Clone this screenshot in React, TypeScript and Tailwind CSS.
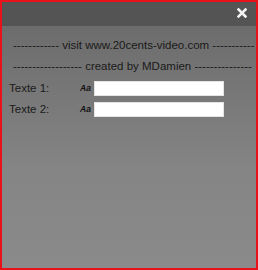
import React from "react";

export default function App() {
  return (
    <div
      className="w-[258px] h-[270px] border-2 border-[#e8131a] flex flex-col overflow-hidden"
      style={{ fontFamily: '"Liberation Sans", Arial, sans-serif' }}
    >
      <div className="h-[24px] shrink-0 bg-[#545454] flex items-start justify-end pr-[9px] pt-[6px]">
        <svg width="10" height="10" viewBox="0 0 10 10">
          <path d="M1.5 1.5 L8.5 8.5 M8.5 1.5 L1.5 8.5" stroke="#f4f4f4" strokeWidth="2.5" strokeLinecap="square" />
        </svg>
      </div>
      <div className="flex-1 bg-gradient-to-b from-[#6c6c6c] via-[#858585] via-60% to-[#8a8a8a] text-[#1a1a1a] text-[11.5px] leading-[21px]">
        <div className="pt-[9px] pl-[11px] whitespace-pre">{"------------ visit www.20cents-video.com -----------"}</div>
        <div className="pl-[11px] h-[22px] whitespace-pre">{"------------------ created by MDamien ---------------"}</div>
        <div className="flex items-center h-[21px] pl-[7px]">
          <span className="w-[71px]">Texte 1:</span>
          <span className="w-[14px] text-[8.5px] font-bold italic text-[#111]">Aa</span>
          <div className="w-[130px] h-[15px] bg-white border border-[#e4e4e4]" />
        </div>
        <div className="flex items-center h-[21px] pl-[7px]">
          <span className="w-[71px]">Texte 2:</span>
          <span className="w-[14px] text-[8.5px] font-bold italic text-[#111]">Aa</span>
          <div className="w-[130px] h-[15px] bg-white border border-[#e4e4e4]" />
        </div>
      </div>
    </div>
  );
}
